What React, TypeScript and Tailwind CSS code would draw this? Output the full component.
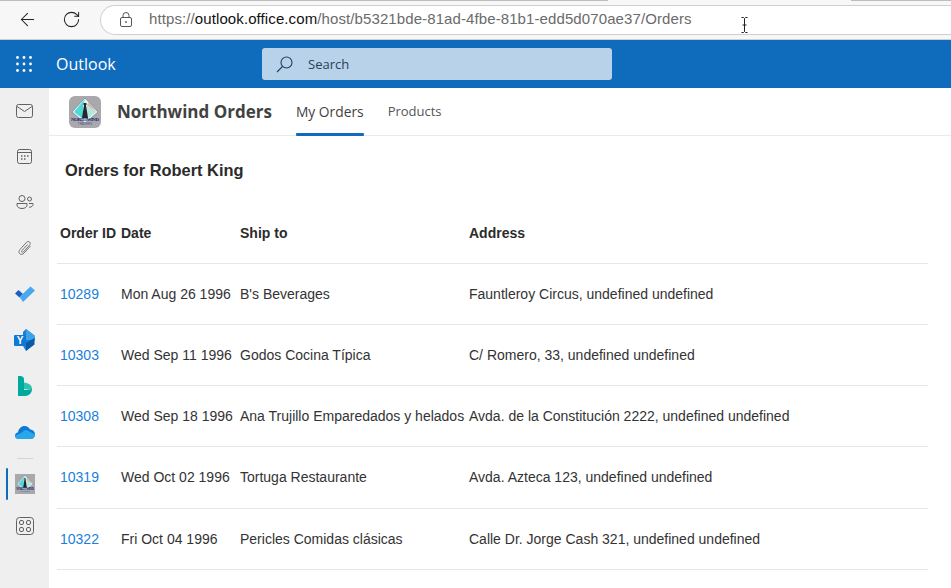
import { ArrowLeft, RotateCw } from "lucide-react"

const orders = [
  { id: "10289", date: "Mon Aug 26 1996", ship: "B's Beverages", address: "Fauntleroy Circus, undefined undefined", h: "h-[61px]" },
  { id: "10303", date: "Wed Sep 11 1996", ship: "Godos Cocina Típica", address: "C/ Romero, 33, undefined undefined", h: "h-[61px]" },
  { id: "10308", date: "Wed Sep 18 1996", ship: "Ana Trujillo Emparedados y helados", address: "Avda. de la Constitución 2222, undefined undefined", h: "h-[61px]" },
  { id: "10319", date: "Wed Oct 02 1996", ship: "Tortuga Restaurante", address: "Avda. Azteca 123, undefined undefined", h: "h-[62px]" },
  { id: "10322", date: "Fri Oct 04 1996", ship: "Pericles Comidas clásicas", address: "Calle Dr. Jorge Cash 321, undefined undefined", h: "h-[61px]" },
]

function WaffleIcon() {
  return (
    <svg width="16" height="16" viewBox="0 0 16 16" fill="#fff">
      {[1.5, 8, 14.5].map((y) =>
        [1.5, 8, 14.5].map((x) => <circle key={`${x}-${y}`} cx={x} cy={y} r="1.4" />)
      )}
    </svg>
  )
}

function NorthwindLogo({ size, rounded }: { size: number; rounded: boolean }) {
  return (
    <svg width={size} height={size} viewBox="0 0 32 32">
      <rect width="32" height="32" rx={rounded ? 6 : 0} fill="#a9a9ab" />
      <polygon points="16,2 29,16 16,27 3,16" fill="#e8f4f2" stroke="#4a7fa5" strokeWidth="0.6" />
      <polygon points="16,3 5,16 14,23 14,9" fill="#4fd8d8" />
      <polygon points="18,9 18,23 27,16" fill="#b6e6e0" />
      <polygon points="18,9 20,6 27,16" fill="#d8b7a8" />
      <polygon points="15,9 17,9 19,22 13,22" fill="#23282c" />
      <rect x="14.5" y="7" width="3" height="2" fill="#23282c" />
      <text x="16" y="25" fontSize="5" fontWeight="700" fill="#26206e" textAnchor="middle" fontFamily="Liberation Serif, serif" textLength="28">NORTHWIND</text>
      <text x="16" y="29" fontSize="3" fill="#55558a" textAnchor="middle" fontFamily="Liberation Sans, sans-serif">TRADERS</text>
    </svg>
  )
}

function RailIcon({ children, h = "h-[46px]" }: { children: React.ReactNode; h?: string }) {
  return <div className={`flex ${h} items-center justify-center`}>{children}</div>
}

function Rail() {
  return (
    <aside className="flex w-[49px] shrink-0 flex-col bg-[#efefef]">
      <RailIcon>
        <svg width="17" height="14" viewBox="0 0 17 14" fill="none" stroke="#616161">
          <rect x="0.5" y="0.5" width="16" height="13" rx="2" />
          <path d="M1 2.5 8.5 7.5 16 2.5" />
        </svg>
      </RailIcon>
      <RailIcon h="h-[45px]">
        <svg width="15" height="15" viewBox="0 0 15 15" fill="none" stroke="#616161">
          <rect x="0.5" y="0.5" width="14" height="14" rx="2" />
          <path d="M1 3.5h13" />
          <path d="M4 7h1.5M7 7h1.5M10 7h1.5M4 10h1.5M7 10h1.5" strokeWidth="1.5" />
        </svg>
      </RailIcon>
      <RailIcon>
        <svg width="18" height="14" viewBox="0 0 18 14" fill="none" stroke="#616161">
          <circle cx="6" cy="3.5" r="3" />
          <circle cx="13.5" cy="4" r="2" />
          <path d="M1 8.5h10v1.5c0 2-2 3.5-5 3.5s-5-1.500-5-3.500z" />
          <path d="M13 8.500h4v1c0 1.700-1.500 2.700-4 2.700" />
        </svg>
      </RailIcon>
      <RailIcon>
        <svg width="14" height="16" viewBox="0 0 14 16" fill="none" stroke="#757575">
          <path d="M12.500 6 6 13.200c-1.300 1.400-3.200 1.500-4.300.500-1.100-1-1-2.800.2-4.100l6.500-7.200c.9-1 2.300-1.200 3.200-.4.900.8.800 2.200-.100 3.200l-6 6.700c-.5.500-1.200.600-1.600.200-.4-.4-.4-1.100.1-1.600L9.500 4.500" />
        </svg>
      </RailIcon>
      <RailIcon h="h-[45px]">
        <svg width="20" height="16" viewBox="0 0 20 16">
          <path d="M0 7.500 3.500 4 8 8 4.500 11.500z" fill="#1b5fc4" />
          <path d="M4.500 11 15.500 0.500 20 4.500 8 16z" fill="#4aa8f0" />
        </svg>
      </RailIcon>
      <RailIcon h="h-[47px]">
        <svg width="21" height="22" viewBox="0 0 21 22">
          <path d="M12 0 20.500 6.500 21 11 12 22 9 17V3z" fill="#1a7fd6" />
          <path d="M12 0 20.500 6.500V11H12z" fill="#3da2ea" />
          <path d="M20.500 9 12 14V22l8.500-6.500z" fill="#0a5aa8" />
          <rect x="0" y="6" width="12" height="11" rx="1" fill="#0f7ad6" />
          <text x="6" y="15" fontSize="10" fontWeight="700" fill="#fff" textAnchor="middle" fontFamily="Liberation Sans, sans-serif">Y</text>
        </svg>
      </RailIcon>
      <RailIcon>
        <svg width="14" height="20" viewBox="0 0 14 20">
          <path d="M0 0h2.500C4.500 0 6 1.500 6 3.500V14.500H0z" fill="#00a99d" />
          <path d="M6 6.500c4.500.5 8 2.500 8 6.500H6z" fill="#2bc3b3" />
          <path d="M0 14h6l8-1c0 4-3 7-7 7H0z" fill="#00a99d" />
        </svg>
      </RailIcon>
      <RailIcon>
        <svg width="20" height="14" viewBox="0 0 20 14">
          <path d="M3.500 14C1.500 14 0 12.500 0 10.700 0 9 1.200 7.700 3 7.500 3.500 3.500 6.500 1 9.500 1c2.500 0 4.500 1.300 5.500 3.500 2.800 0 5 2.200 5 5 0 2.500-2 4.500-4.500 4.500z" fill="#0f78d4" />
          <path d="M7 7.500c1-1.500 2.500-2.500 4.500-2.500L20 9.500c0 2.500-2 4.500-4.500 4.500H3.500C1.500 14 0 12.500 0 10.700l7-3.200z" fill="#28a8ea" />
        </svg>
      </RailIcon>
      <div className="mx-auto mt-[3px] h-px w-[16px] bg-[#d4d4d4]" />
      <div className="relative flex h-[50px] items-center justify-center">
        <div className="absolute left-[6px] top-[9px] h-[32px] w-[2px] rounded bg-[#0f6cbd]" />
        <NorthwindLogo size={20} rounded={false} />
      </div>
      <RailIcon h="h-[34px]">
        <svg width="18" height="18" viewBox="0 0 18 18" fill="none" stroke="#616161">
          <rect x="0.500" y="0.500" width="17" height="17" rx="3" />
          <rect x="3.500" y="3.500" width="4" height="4" rx="1.500" />
          <rect x="10.500" y="3.500" width="4" height="4" rx="1.500" />
          <rect x="3.500" y="10.500" width="4" height="4" rx="1.500" />
          <rect x="10.500" y="10.500" width="4" height="4" rx="1.500" />
        </svg>
      </RailIcon>
    </aside>
  )
}

export default function App() {
  return (
    <div className="flex h-[588px] w-[951px] flex-col overflow-hidden bg-white font-['Liberation_Sans',sans-serif]">
      {/* browser toolbar */}
      <div className="relative flex h-[40px] shrink-0 items-center border-b border-[#d0d0d0] bg-[#f7f7f7]">
        <div className="absolute left-0 top-0 h-px w-[608px] bg-[#bdbdbd]" />
        <div className="absolute right-0 top-0 h-px w-[100px] bg-[#bdbdbd]" />
        <ArrowLeft className="ml-[17px] size-[21px] text-[#222]" strokeWidth={1.2} />
        <RotateCw className="ml-[24px] size-[19px] text-[#222]" strokeWidth={1.3} />
        <div className="ml-[19px] flex h-[30px] flex-1 items-center rounded-l-[15px] border border-r-0 border-[#cfcfcf] bg-white pl-[19px]">
          <svg width="12" height="15" viewBox="0 0 12 15" fill="none" stroke="#555">
            <rect x="0.500" y="5.500" width="11" height="9" rx="1.500" />
            <path d="M3 5.500V3.500a3 3 0 0 1 6 0v2" />
            <circle cx="6" cy="10" r="0.900" fill="#555" stroke="none" />
          </svg>
          <span className="ml-[17px] text-[15px] tracking-[0.1px] text-[#6b6b6b]">
            https://<span className="text-[#111]">outlook.office.com</span>/host/b5321bde-81ad-4fbe-81b1-edd5d070ae37/Orders
          </span>
        </div>
        <svg className="absolute left-[741px] top-[17px]" width="7" height="16" viewBox="0 0 7 16" fill="none" stroke="#222">
          <path d="M0.500 0.500h2l1 1 1-1h2M3.500 1.500v13M0.500 15.500h2l1-1 1 1h2M1.500 8h4" />
        </svg>
      </div>

      {/* outlook bar */}
      <div className="flex h-[48px] shrink-0 items-center bg-[#0f6cbd]">
        <div className="ml-[16px]">
          <WaffleIcon />
        </div>
        <span className="ml-[24px] w-[206px] font-['Open_Sans',sans-serif] text-[16px] font-medium text-white">Outlook</span>
        <div className="flex h-[32px] w-[350px] items-center rounded-[3px] bg-[#b8d2ea] pl-[14px]">
          <svg width="17" height="17" viewBox="0 0 17 17" fill="none" stroke="#1c3f63" strokeWidth="1.100">
            <circle cx="10.500" cy="6.500" r="5.500" />
            <path d="M6.500 10.500 1 16" />
          </svg>
          <span className="ml-[15px] pt-px font-['Open_Sans',sans-serif] text-[13px] text-[#27405c]">Search</span>
        </div>
      </div>

      <div className="flex min-h-0 flex-1">
        <Rail />
        <div className="min-w-0 flex-1">
          {/* app tabs */}
          <div className="flex h-[48px] items-center border-b border-[#ebebeb] pl-[20px]">
            <NorthwindLogo size={32} rounded />
            <span className="ml-[16px] font-['Open_Sans',sans-serif] text-[17px] font-bold text-[#424242]">Northwind Orders</span>
            <div className="relative ml-[24px] flex h-full items-center pt-px font-['Open_Sans',sans-serif] text-[13.8px] font-medium text-[#424242]">
              My Orders
              <div className="absolute inset-x-0 bottom-[-1px] h-[3px] rounded-[1px] bg-[#0f6cbd]" />
            </div>
            <span className="ml-[24px] pt-px font-['Open_Sans',sans-serif] text-[13px] text-[#555]">Products</span>
          </div>

          <h1 className="ml-[16px] mt-[24px] text-[16.4px] font-bold leading-[20px] text-[#2b2b2b]">Orders for Robert King</h1>

          <div className="ml-[8px] mt-[23px] w-[871px] text-[14px] text-[#333]">
            <div className="flex h-[61px] items-center border-b border-[#e6e6e6] font-bold text-[#2b2b2b]">
              <div className="w-[64px] pl-[3px]">Order ID</div>
              <div className="w-[119px]">Date</div>
              <div className="w-[229px]">Ship to</div>
              <div>Address</div>
            </div>
            {orders.map((o) => (
              <div key={o.id} className={`flex ${o.h} items-center border-b border-[#e6e6e6]`}>
                <div className="w-[64px] pl-[3px] text-[#1a7fdc]">{o.id}</div>
                <div className="w-[119px]">{o.date}</div>
                <div className="w-[229px] whitespace-nowrap">{o.ship}</div>
                <div>{o.address}</div>
              </div>
            ))}
          </div>
        </div>
      </div>
    </div>
  )
}
